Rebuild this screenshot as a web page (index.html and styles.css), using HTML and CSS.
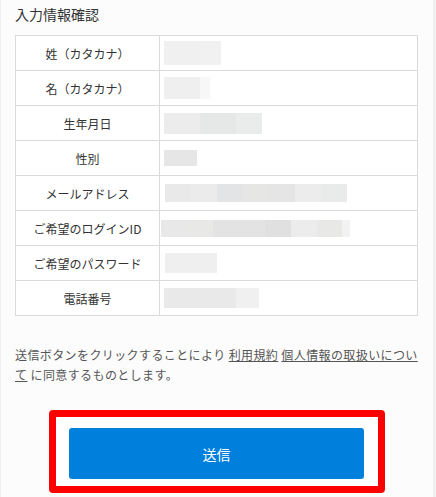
FILE: index.html
```html
<!DOCTYPE html>
<html lang="ja">
<head>
  <meta charset="UTF-8" />
  <meta name="viewport" content="width=device-width, initial-scale=1" />
  <title>入力情報確認</title>
  <link rel="stylesheet" href="styles.css">
</head>
<body>

  <div class="page">
    <h2 class="title">入力情報確認</h2>

    <table class="confirm">
      <tr>
        <th>姓（カタカナ）</th>
        <td><span class="blur blur-sei"></span></td>
      </tr>
      <tr>
        <th>名（カタカナ）</th>
        <td><span class="blur blur-mei"></span></td>
      </tr>
      <tr>
        <th>生年月日</th>
        <td><span class="blur blur-birth"></span></td>
      </tr>
      <tr>
        <th>性別</th>
        <td><span class="blur blur-sex"></span></td>
      </tr>
      <tr>
        <th>メールアドレス</th>
        <td><span class="blur blur-mail"></span></td>
      </tr>
      <tr>
        <th>ご希望のログインID</th>
        <td><span class="blur blur-id"></span></td>
      </tr>
      <tr>
        <th>ご希望のパスワード</th>
        <td><span class="blur blur-pass"></span></td>
      </tr>
      <tr>
        <th>電話番号</th>
        <td><span class="blur blur-tel"></span></td>
      </tr>
    </table>

    <p class="agree">
      送信ボタンをクリックすることにより <a href="#">利用規約</a> <a href="#">個人情報の取扱いについて</a> に同意するものとします。
    </p>

    <div class="highlight">
      <button type="button" class="submit">送信</button>
    </div>
  </div>

</body>
</html>
```

FILE: styles.css
```css
* {
  box-sizing: border-box;
}

body {
  margin: 0;
  background: #f0f0f0;
  font-family: "Noto Sans CJK JP", "Noto Sans", sans-serif;
  color: #333;
}

.page {
  width: 432px;
  height: 497px;
  margin-left: 1px;
  padding: 4px 14px 0;
  background: #fcfcfc;
  overflow: hidden;
}

.title {
  margin: 0;
  font-size: 14px;
  font-weight: 400;
  line-height: 20px;
  color: #333;
}

.confirm {
  width: 403px;
  margin-top: 11px;
  border-collapse: collapse;
  background: #fff;
}

.confirm th,
.confirm td {
  height: 35px;
  padding: 0;
  border: 1px solid #dadada;
  font-size: 12px;
  font-weight: 400;
  color: #333;
}

.confirm th {
  width: 144px;
  text-align: center;
}

.confirm td {
  padding-left: 4px;
}

.blur {
  display: block;
}

.blur-sei {
  width: 57px;
  height: 24px;
  background: linear-gradient(to right, #f0f0f0 0 37px, #f1f1f1 37px);
}

.blur-mei {
  width: 46px;
  height: 22px;
  background: linear-gradient(to right, #efefef 0 36px, #f7f7f7 36px);
}

.blur-birth {
  width: 98px;
  height: 21px;
  background: linear-gradient(to right, #ececec 0 36px, #e6e7e7 36px 72px, #eaebeb 72px);
}

.blur-sex {
  width: 33px;
  height: 16px;
  background: #e6e6e6;
}

.blur-mail {
  width: 182px;
  height: 18px;
  margin-left: 1px;
  background: linear-gradient(to right, #e9e9e9 0 26px, #ebebeb 26px 52px, #e3e4e6 52px 78px, #e6e6e4 78px 104px, #e4e5e4 104px 130px, #ececec 130px 156px, #e9eaea 156px);
}

.blur-id {
  width: 189px;
  height: 17px;
  margin-left: -3px;
  background: linear-gradient(to right, #e8e8e8 0 26px, #e8e8e6 26px 52px, #e3e3e3 52px 104px, #e0e0e0 104px 130px, #ececec 130px 156px, #e8e8e7 156px 181px, #f2f2f2 181px);
}

.blur-pass {
  width: 52px;
  height: 20px;
  margin-left: 1px;
  background: #efefef;
}

.blur-tel {
  width: 95px;
  height: 20px;
  background: linear-gradient(to right, #e9e9e9 0 72px, #f0f0f0 72px);
}

.agree {
  margin: 29px 0 0;
  font-size: 12px;
  line-height: 20px;
  letter-spacing: 0.4px;
  color: #555;
}

.agree a {
  color: #555;
  text-decoration: underline;
}

.highlight {
  width: 336px;
  height: 83px;
  margin: 25px 0 0 34px;
  padding: 11px 14px 0 13px;
  border: 7px solid #ff0000;
  border-radius: 4px;
  background: #fff;
}

.submit {
  display: block;
  width: 295px;
  height: 51px;
  border: none;
  border-radius: 3px;
  background: #0080dd;
  color: #fff;
  font-family: inherit;
  font-size: 14px;
  cursor: pointer;
}
```
